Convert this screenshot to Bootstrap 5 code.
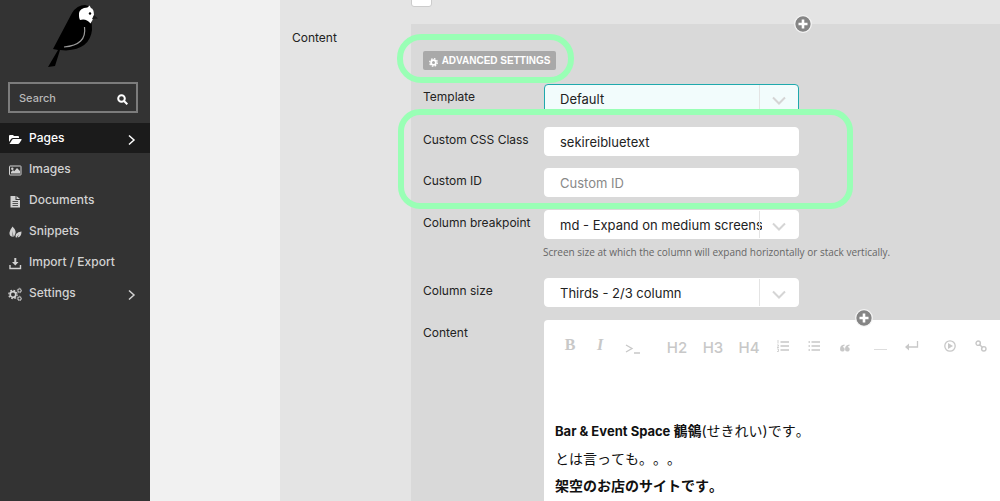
<!DOCTYPE html>
<html lang="ja">
<head>
<meta charset="utf-8">
<meta name="viewport" content="width=device-width, initial-scale=1">
<title>Page editor</title>
<link href="https://cdn.jsdelivr.net/npm/bootstrap@5.3.0/dist/css/bootstrap.min.css" rel="stylesheet">
<style>
body { font: 12px/20px Inter, "Noto Sans CJK JP", sans-serif; color: #222; background: #f1f1f1; overflow-x: hidden; }
.sidebar { width: 150px; background: #333; }
.logo { height: 82px; }
.search-box { height: 31px; border: 2px solid #7c7c7c; margin: 0 12px 10px 8px; }
.search-box input { font-size: 11px; font-weight: 500; color: #ccc; min-width: 0; padding: 0 0 0 9px; }
.search-box input::placeholder { color: #b8b8b8; opacity: 1; }
.menu a { height: 31px; color: #d2d2d2; font-weight: 500; padding: 0 14px 0 8px; }
.menu a.active { height: 30px; background: #1b1b1b; color: #fff; }
.menu .glyph { width: 14px; height: 14px; margin: 2px 7px 0 0; }
.menu .arrow { margin-top: 4px; }
.form-area { background: #e4e4e4; margin-left: 130px; }
.checkbox-row { height: 24px; padding-left: 131px; }
.checkbox-row input { width: 21px; height: 21px; margin-top: -14px; border: 1px solid #ccc; border-radius: 1px; background: #fff; }
.side-label { width: 131px; padding: 4px 0 0 12px; }
.panel { background: #d9d9d9; padding: 27px 0 0 12px; }
.adv { height: 19px; background: #a9a9a9; color: #fff; font: 700 10px/19px "Liberation Sans", sans-serif; border-radius: 2px; width: 133px; }
.ring { border: 6px solid #99ffb5; pointer-events: none; z-index: 3; }
.ring-small { inset: -17px -18px -13px -26px; border-radius: 24px; }
.ring-large { inset: -18px -54px -12px -25px; border-radius: 22px; }
.fields { width: 376px; }
.field-row > label { width: 121px; padding-top: 3px; flex: none; }
.control { height: 29px; width: 255px; font-size: 13px; color: #222; background: #fff; border: 1px solid #fff; border-radius: 4px; padding: 0 15px; outline: 0; appearance: none; }
.control::placeholder { color: #888; opacity: 1; }
select.control { padding-right: 36px; }
.focused .control { background: #f2fcfc; border-color: #1fa9ad; }
.drop { width: 39px; top: 1px; bottom: 1px; right: 1px; border-left: 1px solid #e4e4e4; pointer-events: none; }
.hint { font: 10px/14px "Open Sans", sans-serif; color: #666; padding: 6px 0 19px 120px; white-space: nowrap; }
.add { width: 18px; height: 18px; z-index: 2; }
.add-first { left: 383px; top: -9px; }
.add-second { left: 311px; top: -11px; }
.editor { background: #fff; border-radius: 4px 0 0 0; min-height: 181px; min-width: 0; }
.tools { padding: 8px 0 0 11px; color: #c8c8c8; }
.tools button { width: 31px; height: 32px; color: inherit; flex: none; }
.tools .txt { width: 30px; font: 700 16px/34px "Liberation Serif", serif; }
.tools .code { width: 35px; }
.tools .head { width: 36px; font: 500 15px/40px Inter, sans-serif; }
.prose { padding: 57px 11px 0; line-height: 27px; font-size: 14px; color: #111; text-spacing-trim: space-all; font-kerning: none; }
.prose b { font-size: 13px; }
.prose p { margin: 0; }
.prose .cjk b, .prose b .cjk { font-size: 14px; }
</style>
</head>
<body>
<div class="d-flex min-vh-100">
  <aside class="sidebar flex-shrink-0">
    <a class="logo d-block" href="#" aria-label="Dashboard">
      <svg width="150" height="82" viewBox="0 0 150 82">
        <path d="M53 49 72 13Q77 5 85 5Q93 6 94 14L91 20Q92 24 92 30Q90 49 66 50.500L60 50 55 66 48 67 58 50Z" fill="#000"/>
        <path d="M79 16Q78 10 84 8Q88 8 89.500 5.500L91 8Q94 9 94 15Q93 20 90.500 23.500Q86 18 80 20Q79 18 79 16Z" fill="#fff"/>
        <circle cx="90" cy="13.500" r="1.200" fill="#000"/><path d="M94 15 98 18.500 92 19Z" fill="#191919"/>
        <path d="M84.500 27Q87 45 64 47" fill="none" stroke="#999" stroke-width="1.200"/>
      </svg>
    </a>
    <form class="search-box d-flex align-items-center" role="search">
      <input class="border-0 bg-transparent flex-grow-1" type="search" placeholder="Search" aria-label="Search">
      <button class="btn p-0 border-0 d-flex me-2 mt-1" type="button" aria-label="Submit search"><svg width="11" height="11" viewBox="0 0 11 11" fill="none" stroke="#fff" stroke-width="2"><circle cx="4.500" cy="4.500" r="3.300"/><path d="M7 7l3.300 3.300"/></svg></button>
    </form>
    <nav class="menu" aria-label="Main">
      <a class="active d-flex align-items-center text-decoration-none" href="#"><svg class="glyph" viewBox="0 0 14 14" fill="currentColor"><path d="M1 10V4q0-1 1-1h3l1 1h4q1 0 1 1v1H5q-1 0-2 1zM1.500 12 4 8q.5-1 1.500-1H13q1 0 .5 1l-2 3q-.6 1-1.600 1z"/></svg>Pages<svg class="arrow ms-auto" width="8" height="12" viewBox="0 0 8 12" fill="none" stroke="currentColor" stroke-width="1.500"><path d="M1 1.500 6 6 1 10.500"/></svg></a>
      <a class="d-flex align-items-center text-decoration-none" href="#"><svg class="glyph" viewBox="0 0 14 14"><rect x="1.500" y="3" width="11.500" height="9" rx=".5" fill="none" stroke="currentColor"/><circle cx="4.300" cy="5.700" r="1.200" fill="currentColor"/><path d="M3 10.500V9l2-2 1.200 1.200L9 5l3 3v2.500z" fill="currentColor"/></svg>Images</a>
      <a class="d-flex align-items-center text-decoration-none" href="#"><svg class="glyph" viewBox="0 0 14 14"><path d="M2.500 2h5v4h4.500v7.500H2.500zM8.500 2l3.500 3H8.500z" fill="currentColor"/><path d="M4.500 7.500h5.500M4.500 9.500h5.500M4.500 11.500h5.500" stroke="#333" stroke-width=".8"/></svg>Documents</a>
      <a class="d-flex align-items-center text-decoration-none" href="#"><svg class="glyph" viewBox="0 0 14 14" fill="currentColor"><path d="M4.500 1.500Q9 6 7 9.500 6.500 11 5.500 12L4.500 6 4.700 12Q1 11 1.500 7.500 2 5 4.500 1.500ZM13.500 6.500Q13.500 12 9.500 12.500L11 9.500 8 13Q7 11 8 9 10 6.500 13.500 6.500Z"/></svg>Snippets</a>
      <a class="d-flex align-items-center text-decoration-none" href="#"><svg class="glyph" viewBox="0 0 14 14"><path d="M2 9v3.500h10.500V9" fill="none" stroke="currentColor" stroke-width="1.400"/><path d="M6.300 2h2v4h2.200L7.300 9.500 4 6h2.300z" fill="currentColor"/></svg>Import / Export</a>
      <a class="d-flex align-items-center text-decoration-none" href="#"><svg class="glyph" viewBox="0 0 14 14" fill="none" stroke="currentColor"><circle cx="5" cy="7.500" r="2.800" stroke-width="1.700"/><circle cx="5" cy="7.500" r="4.200" stroke-width="1.200" stroke-dasharray="1.700 1.600"/><circle cx="11.500" cy="3.500" r="1.500"/><circle cx="11.500" cy="11.500" r="1.500"/><circle cx="11.500" cy="3.500" r="2.300" stroke-width=".8" stroke-dasharray="1 .8"/><circle cx="11.500" cy="11.500" r="2.300" stroke-width=".8" stroke-dasharray="1 .8"/></svg>Settings<svg class="arrow ms-auto" width="8" height="12" viewBox="0 0 8 12" fill="none" stroke="currentColor" stroke-width="1.500"><path d="M1 1.500 6 6 1 10.500"/></svg></a>
    </nav>
  </aside>

  <main class="flex-grow-1 d-flex flex-column" style="min-width:0">
    <div class="form-area flex-grow-1 d-flex flex-column">
      <div class="checkbox-row overflow-hidden d-flex align-items-start"><input class="form-check-input" type="checkbox" aria-label="Enabled"></div>
      <div class="d-flex flex-grow-1">
        <div class="side-label flex-shrink-0">Content</div>
        <section class="panel position-relative flex-grow-1 d-flex flex-column" style="min-width:0">
          <button class="add add-first btn p-0 border-0 d-flex position-absolute" type="button" aria-label="Add block"><svg width="18" height="18" viewBox="0 0 18 18"><circle cx="9" cy="9" r="8.300" fill="#858585" stroke="#f5f5f5" stroke-width="1.300"/><path d="M9 4.500v9M4.500 9h9" stroke="#fff" stroke-width="2.600"/></svg></button>
          <div class="position-relative align-self-start mb-3">
            <button class="adv btn border-0 p-0 d-flex align-items-center justify-content-center gap-1" type="button"><svg class="mt-1" width="9" height="9" viewBox="0 0 9 9" fill="none" stroke="#fff"><circle cx="4.500" cy="4.500" r="2.400" stroke-width="1.800"/><circle cx="4.500" cy="4.500" r="3.800" stroke-width="1.300" stroke-dasharray="1.600 1.380"/></svg>ADVANCED SETTINGS</button>
            <div class="ring ring-small position-absolute"></div>
          </div>
          <div class="fields">
            <div class="field-row focused d-flex" style="margin:-2px 0 14px"><label for="template">Template</label><div class="position-relative"><select class="control" id="template"><option>Default</option></select><span class="drop position-absolute d-flex align-items-center justify-content-center pt-1"><svg width="14" height="9" viewBox="0 0 14 9" fill="none" stroke="#d5d5d5" stroke-width="2"><path d="M1 1.500 7 7.500 13 1.500"/></svg></span></div></div>
            <div class="position-relative d-flex flex-column" style="gap:12px">
              <div class="field-row d-flex"><label for="css-class">Custom CSS Class</label><input class="control" id="css-class" type="text" value="sekireibluetext"></div>
              <div class="field-row d-flex"><label for="custom-id">Custom ID</label><input class="control" id="custom-id" type="text" placeholder="Custom ID"></div>
              <div class="ring ring-large position-absolute"></div>
            </div>
            <div class="field-row d-flex" style="margin-top:13px"><label for="breakpoint">Column breakpoint</label><div class="position-relative"><select class="control" id="breakpoint"><option>md - Expand on medium screens</option></select><span class="drop position-absolute d-flex align-items-center justify-content-center pt-1"><svg width="14" height="9" viewBox="0 0 14 9" fill="none" stroke="#d5d5d5" stroke-width="2"><path d="M1 1.500 7 7.500 13 1.500"/></svg></span></div></div>
            <div class="hint">Screen size at which the column will expand horizontally or stack vertically.</div>
            <div class="field-row d-flex" style="margin-bottom:13px"><label for="col-size">Column size</label><div class="position-relative"><select class="control" id="col-size"><option>Thirds - 2/3 column</option></select><span class="drop position-absolute d-flex align-items-center justify-content-center pt-1"><svg width="14" height="9" viewBox="0 0 14 9" fill="none" stroke="#d5d5d5" stroke-width="2"><path d="M1 1.500 7 7.500 13 1.500"/></svg></span></div></div>
          </div>
          <div class="field-row d-flex flex-grow-1">
            <label id="content-label">Content</label>
            <div class="editor position-relative flex-grow-1">
              <button class="add add-second btn p-0 border-0 d-flex position-absolute" type="button" aria-label="Add content"><svg width="18" height="18" viewBox="0 0 18 18"><circle cx="9" cy="9" r="8.300" fill="#858585" stroke="#f5f5f5" stroke-width="1.300"/><path d="M9 4.500v9M4.500 9h9" stroke="#fff" stroke-width="2.600"/></svg></button>
              <div class="tools d-flex" role="toolbar" aria-label="Formatting">
                <button class="btn border-0 p-0 txt" type="button">B</button>
                <button class="btn border-0 p-0 txt fst-italic" type="button">I</button>
                <button class="btn border-0 p-0 code" type="button" aria-label="Code"><svg width="16" height="16" viewBox="0 0 16 16" fill="none" stroke="currentColor" stroke-width="1.300"><path d="M1 7l6 3.500L1 14M9 15h6"/></svg></button>
                <button class="btn border-0 p-0 head" style="margin-left:9px" type="button">H2</button>
                <button class="btn border-0 p-0 head" type="button">H3</button>
                <button class="btn border-0 p-0 head" type="button">H4</button>
                <button class="btn border-0 p-0" type="button" aria-label="Numbered list"><svg width="12" height="12" viewBox="0 0 12 12" fill="none" stroke="currentColor"><path d="M3.500 2H12M3.500 6H12M3.500 10H12" stroke-width="1.300"/><path d="M1 0v3.500M0 5h1.500v1L0 7.500h2M0 9h1.500v2.500H0" stroke-width=".8"/></svg></button>
                <button class="btn border-0 p-0" type="button" aria-label="Bullet list"><svg width="12" height="12" viewBox="0 0 12 12" fill="none" stroke="currentColor" stroke-width="1.500"><path d="M3.500 2H12M3.500 6H12M3.500 10H12M.5 2h1.500M.5 6h1.500M.5 10h1.500"/></svg></button>
                <button class="btn border-0 p-0 pt-1" type="button" aria-label="Quote"><svg width="10" height="8" viewBox="0 0 10 8" fill="currentColor"><path d="M4.500.5V1.800Q3 2 2.800 3A2.300 2.300 0 1 1 .1 5Q0 1 4.500.5ZM9.500.5V1.800Q8 2 7.800 3A2.300 2.300 0 1 1 5.100 5Q5 1 9.500.5Z"/></svg></button>
                <button class="btn border-0 p-0 pt-1" style="margin-left:5px" type="button" aria-label="Horizontal line"><svg width="13" height="8" viewBox="0 0 13 8"><path d="M0 5.500h13" stroke="#ddd"/></svg></button>
                <button class="btn border-0 p-0" type="button" aria-label="Line break"><svg width="14" height="12" viewBox="0 0 14 12"><path d="M12.500 1v6H3" fill="none" stroke="currentColor" stroke-width="1.300"/><path d="M0 7l4-3.500v7z" fill="currentColor"/></svg></button>
                <button class="btn border-0 p-0" style="margin-left:7px" type="button" aria-label="Embed"><svg width="12" height="12" viewBox="0 0 12 12"><circle cx="6" cy="6" r="5.200" fill="none" stroke="currentColor" stroke-width="1.300"/><path d="M4 3l5 3-5 3z" fill="currentColor"/></svg></button>
                <button class="btn border-0 p-0" type="button" aria-label="Link"><svg width="12" height="12" viewBox="0 0 12 12" fill="none" stroke="currentColor" stroke-width="1.400"><circle cx="3.200" cy="3.200" r="2.200"/><circle cx="8.800" cy="8.800" r="2.200"/><path d="M4 4l4 4"/></svg></button>
              </div>
              <div class="prose" contenteditable="true" role="textbox" aria-labelledby="content-label">
                <p><b>Bar &amp; Event Space <span class="cjk">鶺鴒</span></b>(せきれい)です。</p>
                <p>とは言っても。。。</p>
                <p class="cjk"><b>架空のお店のサイトです。</b></p>
              </div>
            </div>
          </div>
        </section>
      </div>
    </div>
  </main>
</div>
<script src="https://cdn.jsdelivr.net/npm/bootstrap@5.3.0/dist/js/bootstrap.bundle.min.js"></script>
</body>
</html>
